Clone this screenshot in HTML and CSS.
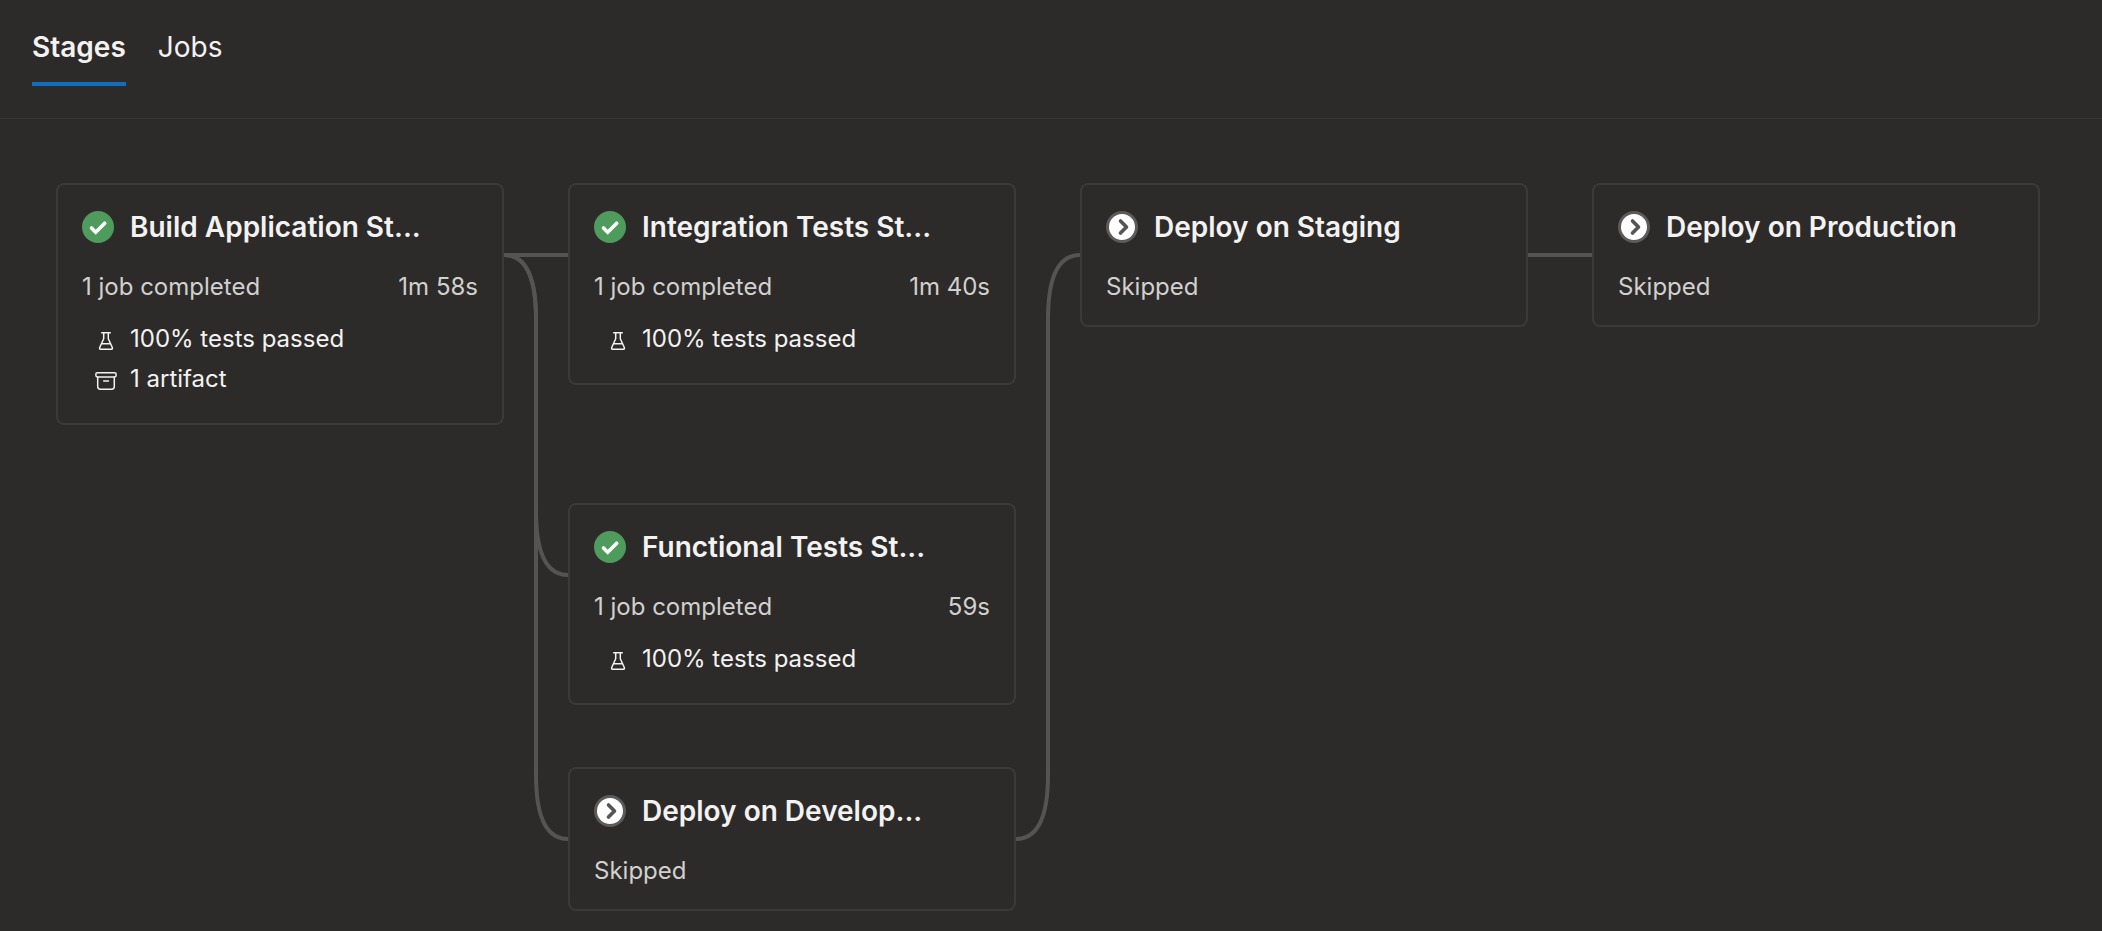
FILE: index.html
```html
<!DOCTYPE html>
<html lang="en">
<head>
<meta charset="utf-8">
<meta name="viewport" content="width=device-width, initial-scale=1">
<title>Pipeline run</title>
<link rel="stylesheet" href="styles.css">
</head>
<body>
<svg class="symbols" aria-hidden="true">
  <symbol id="success" viewBox="0 0 32 32">
    <circle cx="16" cy="16" r="16" fill="#4f9a5d"/>
    <path d="M9.500 17l4.200 4.200 9-9" fill="none" stroke="#fff" stroke-width="3.600" stroke-linecap="round"/>
  </symbol>
  <symbol id="skipped" viewBox="0 0 32 32">
    <circle cx="16" cy="16" r="16" fill="#5b5b5b"/>
    <circle cx="16" cy="16" r="13" fill="#fff"/>
    <path d="M14.500 10l6 6-6 6" fill="none" stroke="#555" stroke-width="3.600" stroke-linecap="round" stroke-linejoin="round"/>
  </symbol>
  <symbol id="flask" viewBox="0 0 24 24">
    <g fill="none" stroke="#f3f2f1" stroke-width="1.500" stroke-linecap="round" stroke-linejoin="round">
      <path d="M7.700 5.700h8.600M9.700 5.700v6l-3.900 8.500q-.9 2.100 1.400 2.100h9.600q2.300 0 1.400-2.100l-3.900-8.500v-6"/>
      <path d="M7.700 16.800h8.600"/>
    </g>
  </symbol>
  <symbol id="archive" viewBox="0 0 24 24">
    <g fill="none" stroke="#f3f2f1" stroke-width="1.500" stroke-linecap="round" stroke-linejoin="round">
      <rect x="1.900" y="5.700" width="20.200" height="4.200" rx="1.400"/>
      <path d="M3.700 9.900v9.600q0 2.700 2.700 2.700h11.200q2.700 0 2.700-2.700V9.900M9.700 14h4.800"/>
    </g>
  </symbol>
</svg>

<header class="header">
  <div class="tabs" role="tablist">
    <button class="tab tab-active" type="button" role="tab" aria-selected="true">Stages</button>
    <button class="tab" type="button" role="tab" aria-selected="false">Jobs</button>
  </div>
</header>

<main class="canvas">
  <div class="graph">
    <svg class="edges" aria-hidden="true">
      <path d="M448 72H512"/>
      <path d="M448 72Q480 72 480 136V328Q480 392 512 392"/>
      <path d="M448 72Q480 72 480 136V592Q480 656 512 656"/>
      <path d="M960 656Q992 656 992 592V136Q992 72 1024 72"/>
      <path d="M1472 72H1536"/>
    </svg>

    <article class="stage col-1 row-1">
      <div class="stage-head"><svg class="status"><use href="#success"/></svg><h2 class="stage-title">Build Application St...</h2></div>
      <div class="stage-meta"><span>1 job completed</span><span>1m 58s</span></div>
      <ul class="facts">
        <li class="fact"><svg class="fact-icon"><use href="#flask"/></svg>100% tests passed</li>
        <li class="fact"><svg class="fact-icon"><use href="#archive"/></svg>1 artifact</li>
      </ul>
    </article>

    <article class="stage col-2 row-1">
      <div class="stage-head"><svg class="status"><use href="#success"/></svg><h2 class="stage-title">Integration Tests St...</h2></div>
      <div class="stage-meta"><span>1 job completed</span><span>1m 40s</span></div>
      <ul class="facts">
        <li class="fact"><svg class="fact-icon"><use href="#flask"/></svg>100% tests passed</li>
      </ul>
    </article>

    <article class="stage col-2 row-2">
      <div class="stage-head"><svg class="status"><use href="#success"/></svg><h2 class="stage-title">Functional Tests St...</h2></div>
      <div class="stage-meta"><span>1 job completed</span><span>59s</span></div>
      <ul class="facts">
        <li class="fact"><svg class="fact-icon"><use href="#flask"/></svg>100% tests passed</li>
      </ul>
    </article>

    <article class="stage col-2 row-3">
      <div class="stage-head"><svg class="status"><use href="#skipped"/></svg><h2 class="stage-title">Deploy on Develop...</h2></div>
      <div class="stage-meta"><span>Skipped</span></div>
    </article>

    <article class="stage col-3 row-1">
      <div class="stage-head"><svg class="status"><use href="#skipped"/></svg><h2 class="stage-title">Deploy on Staging</h2></div>
      <div class="stage-meta"><span>Skipped</span></div>
    </article>

    <article class="stage col-4 row-1">
      <div class="stage-head"><svg class="status"><use href="#skipped"/></svg><h2 class="stage-title">Deploy on Production</h2></div>
      <div class="stage-meta"><span>Skipped</span></div>
    </article>
  </div>
</main>
</body>
</html>
```

FILE: styles.css
```css
* {
  box-sizing: border-box;
}

body {
  margin: 0;
  background: #2c2b29;
  color: #f3f2f1;
  font-family: Inter, "Liberation Sans", sans-serif;
  font-size: 24px;
}

.symbols {
  display: none;
}

.header {
  padding: 28px 32px 32px;
  border-bottom: 1px solid #373634;
}

.tabs {
  display: flex;
  gap: 32px;
}

.tab {
  padding: 0 0 16px;
  border: 0;
  border-bottom: 4px solid transparent;
  background: none;
  color: inherit;
  font: 400 28px/38px Inter, "Liberation Sans", sans-serif;
  cursor: pointer;
}

.tab-active {
  border-bottom-color: #106ebe;
  font-weight: 600;
}

.canvas {
  padding: 64px 56px 20px;
  overflow-x: auto;
}

.graph {
  position: relative;
  display: grid;
  grid-template-columns: repeat(4, 448px);
  grid-template-rows: minmax(258px, auto) auto auto;
  gap: 62px 64px;
  align-items: start;
  width: max-content;
}

.edges {
  position: absolute;
  inset: 0;
  width: 100%;
  height: 100%;
  fill: none;
  stroke: #555452;
  stroke-width: 4px;
}

.stage {
  position: relative;
  padding: 24px 24px 20px;
  border: 2px solid #3b3a38;
  border-radius: 8px;
  background: #2c2b29;
}

.col-1 { grid-column: 1; }
.col-2 { grid-column: 2; }
.col-3 { grid-column: 3; }
.col-4 { grid-column: 4; }
.row-1 { grid-row: 1; }
.row-2 { grid-row: 2; }
.row-3 { grid-row: 3; }

.stage-head {
  display: flex;
  align-items: center;
  gap: 16px;
  margin-bottom: 24px;
}

.status {
  flex: none;
  width: 32px;
  height: 32px;
}

.stage-title {
  margin: 0;
  font-size: 28px;
  font-weight: 600;
  line-height: 36px;
  white-space: nowrap;
}

.stage-meta {
  display: flex;
  justify-content: space-between;
  color: #d2d0ce;
  line-height: 36px;
}

.facts {
  margin: 14px 0 4px;
  padding: 0 0 0 12px;
  list-style: none;
}

.fact {
  display: flex;
  align-items: center;
  gap: 12px;
  line-height: 40px;
}

.fact-icon {
  width: 24px;
  height: 24px;
}
```
